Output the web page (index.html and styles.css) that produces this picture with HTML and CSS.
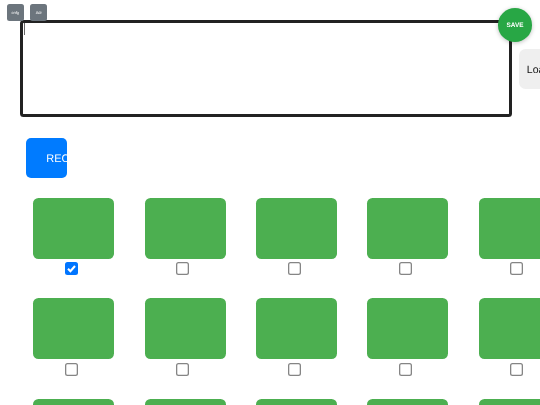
FILE: index.html
```html
<!DOCTYPE html>
<html lang="en">
<head>
<meta charset="utf-8">
<title>Recorder</title>
<link rel="stylesheet" href="styles.css">
</head>
<body>
<div class="page">
  <div class="tools">
    <button class="tool">cnfg</button>
    <button class="tool">Adr</button>
  </div>
  <button class="save">SAVE</button>
  <div class="top">
    <div class="editor"><span class="caret"></span></div>
    <button class="load">Load</button>
  </div>
  <button class="rec"><span>REC</span></button>
  <div class="grid">
    <div class="cell"><div class="pad"></div><span class="check checked"><svg viewBox="0 0 13 13" width="13" height="13"><path d="M3 6.8 5.4 9.2 10 4" fill="none" stroke="#fff" stroke-width="2.1"/></svg></span></div>
    <div class="cell"><div class="pad"></div><span class="check"></span></div>
    <div class="cell"><div class="pad"></div><span class="check"></span></div>
    <div class="cell"><div class="pad"></div><span class="check"></span></div>
    <div class="cell"><div class="pad"></div><span class="check"></span></div>
    <div class="cell"><div class="pad"></div><span class="check"></span></div>
    <div class="cell"><div class="pad"></div><span class="check"></span></div>
    <div class="cell"><div class="pad"></div><span class="check"></span></div>
    <div class="cell"><div class="pad"></div><span class="check"></span></div>
    <div class="cell"><div class="pad"></div><span class="check"></span></div>
    <div class="cell"><div class="pad"></div><span class="check"></span></div>
    <div class="cell"><div class="pad"></div><span class="check"></span></div>
    <div class="cell"><div class="pad"></div><span class="check"></span></div>
    <div class="cell"><div class="pad"></div><span class="check"></span></div>
    <div class="cell"><div class="pad"></div><span class="check"></span></div>
  </div>
</div>
</body>
</html>
```
FILE: styles.css
```css
* { box-sizing: border-box; }
html, body { margin: 0; height: 100%; overflow: hidden; background: #fff; }
body { font-family: "Liberation Sans", Arial, sans-serif; text-rendering: geometricPrecision; }
button { text-rendering: geometricPrecision; }
.page { position: relative; width: 540px; height: 405px; overflow: hidden; padding-top: 20.3px; will-change: transform; }
.tools { position: absolute; left: 6.7px; top: 4px; display: flex; gap: 6.6px; z-index: 2; }
.tool { width: 17px; height: 17px; padding: 0; border: 0; border-radius: 2.5px; background: #6c757d; color: #fff; font: 4px "Liberation Sans", Arial, sans-serif; }
.save { position: absolute; left: 497.7px; top: 8.2px; width: 34.6px; height: 34px; padding: 0; border: 0; border-radius: 50%; background: #28a745; color: #fff; font: bold 6.4px "Liberation Sans", Arial, sans-serif; box-shadow: 0 1px 4px rgba(0,0,0,.25); z-index: 2; }
.top { display: flex; align-items: center; gap: 6.5px; margin-left: 20.3px; width: 600px; }
.editor { width: 492px; height: 97px; flex: none; border: 3px solid #222; border-radius: 3.5px; background: #fff; padding: 0 0 0 1px; }
.caret { display: block; width: 1px; height: 12px; background: #666; }
.load { flex: none; width: 60px; height: 40px; padding: 2px 0 0 8px; border: 0; border-radius: 6.5px; background: #efefef; color: #111; font: 10.5px "Liberation Sans", Arial, sans-serif; text-align: left; }
.rec { display: block; width: 40.7px; height: 40.3px; margin: 20.3px 0 0 26.3px; padding: 2px 0 0 20px; border: 0; border-radius: 5px; background: #007bff; color: #fff; font: 11px "Liberation Sans", Arial, sans-serif; text-align: left; white-space: nowrap; }
.rec span { display: block; width: 20.7px; overflow: hidden; }
.grid { display: grid; grid-template-columns: repeat(5, 81px); column-gap: 30.33px; row-gap: 23.1px; margin: 20.2px 0 0 33.3px; width: 600px; }
.cell { display: flex; flex-direction: column; align-items: center; gap: 3.3px; }
.pad { width: 81px; height: 61px; border-radius: 5.5px; background: #4caf50; }
.check { display: block; width: 13px; height: 13px; margin-right: 4.6px; border-radius: 2.5px; background: #fff; box-shadow: inset 0 0 0 1.3px #858585; }
.check.checked { background: #0075ff; box-shadow: none; }
.check svg { display: block; }
```
